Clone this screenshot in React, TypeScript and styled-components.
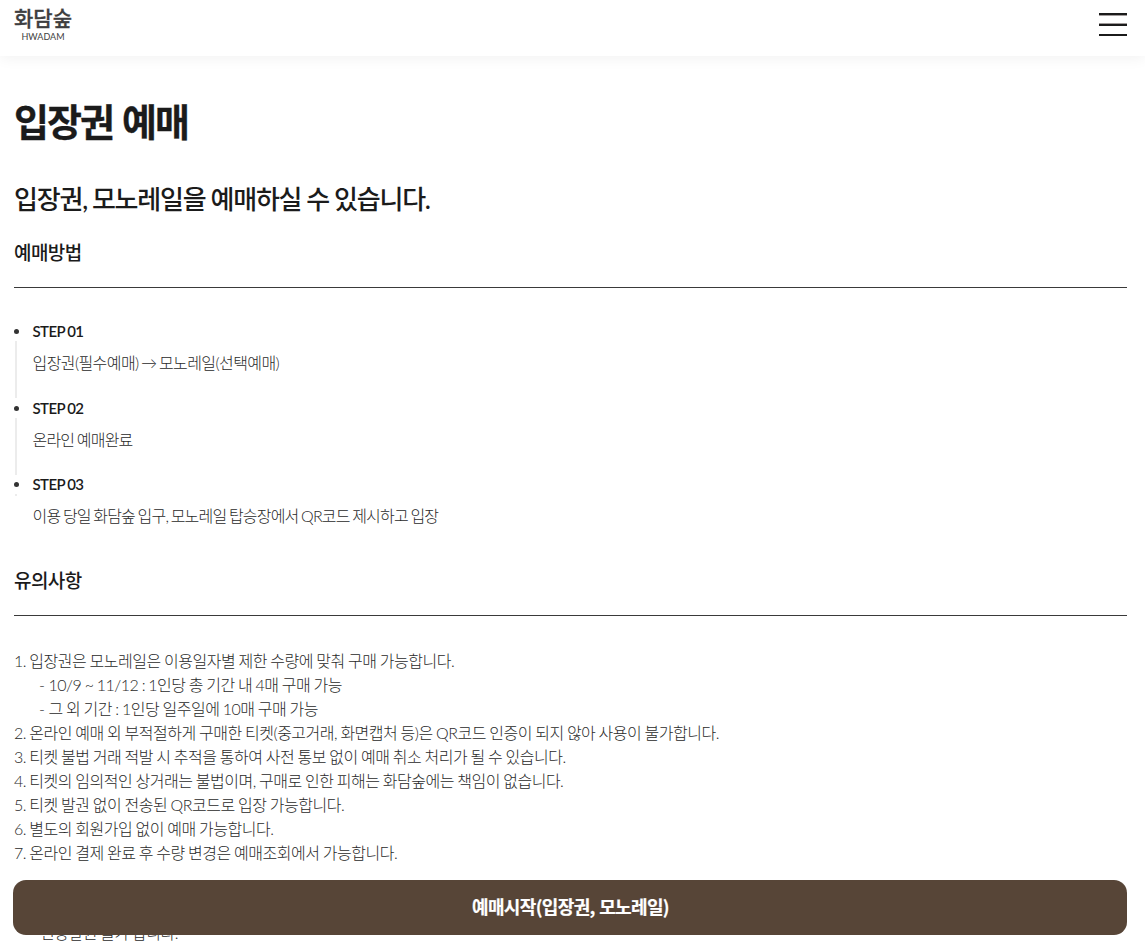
import React from "react";
import styled, { createGlobalStyle } from "styled-components";

const GlobalStyle = createGlobalStyle`
  * {
    box-sizing: border-box;
  }

  body {
    margin: 0;
    background: #fff;
    overflow: hidden;
    color: #1b1b1b;
    font-family: Lato, "Noto Sans CJK KR", sans-serif;
    font-size: 16px;
    font-weight: 300;
    line-height: 24px;
    letter-spacing: -0.5px;
  }

  h1, h2, h3, ul, ol, p {
    margin: 0;
    padding: 0;
    list-style: none;
  }
`;

const Page = styled.div`
  height: 949px;
  overflow: hidden;
`;

const Header = styled.header`
  display: flex;
  justify-content: space-between;
  height: 56px;
  padding: 7px 18px 0 14px;
  box-shadow: 0 2px 14px rgba(0, 0, 0, 0.06);
`;

const Logo = styled.div`
  width: 58px;
  color: #3e3e40;
  text-align: center;
`;

const LogoName = styled.div`
  font-family: "Noto Sans CJK KR", sans-serif;
  font-size: 21px;
  font-weight: 500;
  line-height: 21px;
  letter-spacing: 0;
  white-space: nowrap;
  -webkit-text-stroke: 0.3px #3e3e40;
`;

const LogoSub = styled.div`
  margin-top: 4px;
  font-size: 9px;
  font-weight: 400;
  line-height: 10px;
  letter-spacing: 0;
`;

const MenuButton = styled.button`
  display: flex;
  width: 28px;
  height: 36px;
  padding: 6px 0 0;
  border: 0;
  background: none;
`;

const Content = styled.main`
  padding: 0 18px 0 14px;
`;

const PageTitle = styled.h1`
  padding-top: 35px;
  font-size: 38px;
  font-weight: 700;
  line-height: 60px;
  letter-spacing: -2px;
  word-spacing: 2px;
  -webkit-text-stroke: 0.3px #1b1b1b;
`;

const Lead = styled.h2`
  padding-top: 28px;
  font-size: 26px;
  font-weight: 500;
  line-height: 40px;
  letter-spacing: -1.2px;
  word-spacing: -0.4px;
`;

const SectionTitle = styled.h3`
  height: 69px;
  padding-top: 20px;
  border-bottom: 1px solid #3a3a3a;
  font-size: 19px;
  font-weight: 500;
  line-height: 28px;
  letter-spacing: -0.6px;
`;

const Steps = styled.ol`
  padding-top: 32px;
  height: 259px;
`;

const Step = styled.li`
  display: grid;
  grid-template-columns: 18.5px 1fr;
  height: 76.5px;
`;

const Rail = styled.div`
  display: flex;
  flex-direction: column;
  align-items: center;
  width: 5px;
  padding-top: 9px;
`;

const Dot = styled.span`
  width: 5px;
  height: 5px;
  border-radius: 50%;
  background: #333;
`;

const Line = styled.span<{ $short?: boolean }>`
  width: 2px;
  height: ${({ $short }) => ($short ? "2px" : "57px")};
  margin: 7px 1px 0 0;
  background: #ececec;
`;

const StepName = styled.p`
  font-size: 15px;
  font-weight: 600;
  line-height: 22px;
  letter-spacing: -0.6px;
  word-spacing: -0.6px;
`;

const StepText = styled.p<{ $wide?: boolean }>`
  padding-top: 9px;
  color: #2a2a2a;
  letter-spacing: ${({ $wide }) => ($wide ? "-0.58px" : "-0.8px")};
  word-spacing: ${({ $wide }) => ($wide ? "-1.3px" : "-1px")};
`;

const Notices = styled.ul`
  padding-top: 33px;
  color: #2a2a2a;
  letter-spacing: -0.48px;
  word-spacing: -0.6px;
`;

const Notice = styled.li<{ $indent?: number }>`
  height: 24px;
  padding-left: ${({ $indent = 0 }) => $indent}px;
  white-space: nowrap;
`;

const Dash = styled.span`
  margin-right: 0.8px;
`;

const LastNotice = styled(Notice)`
  margin-top: 56px;
`;

const StartButton = styled.button`
  position: fixed;
  left: 13px;
  right: 18px;
  bottom: 14px;
  height: 55px;
  padding: 0 0 2px 1px;
  border: 0;
  border-radius: 13px;
  background: #574537;
  color: #fff;
  font: 700 18px/53px "Noto Sans CJK KR", sans-serif;
  letter-spacing: -0.65px;
  word-spacing: 1px;
  -webkit-text-stroke: 0.2px #fff;
`;

const steps = [
  { name: "STEP 01", text: "입장권(필수예매) → 모노레일(선택예매)", wide: true },
  { name: "STEP 02", text: "온라인 예매완료" },
  { name: "STEP 03", text: "이용 당일 화담숲 입구, 모노레일 탑승장에서 QR코드 제시하고 입장" },
];

const notices = [
  { text: "1. 입장권은 모노레일은 이용일자별 제한 수량에 맞춰 구매 가능합니다." },
  { text: "10/9 ~ 11/12 : 1인당 총 기간 내 4매 구매 가능", sub: true },
  { text: "그 외 기간 : 1인당 일주일에 10매 구매 가능", sub: true },
  { text: "2. 온라인 예매 외 부적절하게 구매한 티켓(중고거래, 화면캡처 등)은 QR코드 인증이 되지 않아 사용이 불가합니다." },
  { text: "3. 티켓 불법 거래 적발 시 추적을 통하여 사전 통보 없이 예매 취소 처리가 될 수 있습니다." },
  { text: "4. 티켓의 임의적인 상거래는 불법이며, 구매로 인한 피해는 화담숲에는 책임이 없습니다." },
  { text: "5. 티켓 발권 없이 전송된 QR코드로 입장 가능합니다." },
  { text: "6. 별도의 회원가입 없이 예매 가능합니다." },
  { text: "7. 온라인 결제 완료 후 수량 변경은 예매조회에서 가능합니다." },
];

export default function App() {
  return (
    <Page>
      <GlobalStyle />
      <Header>
        <Logo>
          <LogoName>화담숲</LogoName>
          <LogoSub>HWADAM</LogoSub>
        </Logo>
        <MenuButton aria-label="menu">
          <svg width="28" height="24" viewBox="0 0 28 24">
            <path d="M0 0h28v2H0zM0 11h28v2H0zM0 21h28v2H0z" fill="#1b1b1b" />
            <path d="M0 2h28v1H0zM0 10h28v1H0z" fill="#a09b9b" />
          </svg>
        </MenuButton>
      </Header>
      <Content>
        <PageTitle>입장권 예매</PageTitle>
        <Lead>입장권, 모노레일을 예매하실 수 있습니다.</Lead>
        <SectionTitle>예매방법</SectionTitle>
        <Steps>
          {steps.map((step, i) => (
            <Step key={step.name}>
              <Rail>
                <Dot />
                <Line $short={i === steps.length - 1} />
              </Rail>
              <div>
                <StepName>{step.name}</StepName>
                <StepText $wide={step.wide}>{step.text}</StepText>
              </div>
            </Step>
          ))}
        </Steps>
        <SectionTitle>유의사항</SectionTitle>
        <Notices>
          {notices.map((notice) => (
            <Notice key={notice.text} $indent={notice.sub ? 25 : 0}>
              {notice.sub && <Dash>- </Dash>}
              {notice.text}
            </Notice>
          ))}
          <LastNotice $indent={26}>현장발권 불가 합니다.</LastNotice>
        </Notices>
      </Content>
      <StartButton>예매시작(입장권, 모노레일)</StartButton>
    </Page>
  );
}
